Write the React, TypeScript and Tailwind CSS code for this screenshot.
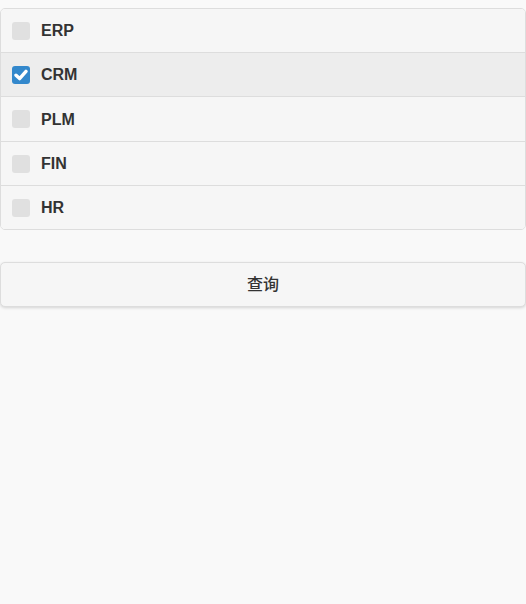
import React, { useState } from "react";

const items = ["ERP", "CRM", "PLM", "FIN", "HR"];

export default function App() {
  const [checked, setChecked] = useState<Record<string, boolean>>({ CRM: true });
  return (
    <div
      className="min-h-[604px] bg-[#f9f9f9] text-[#333]"
      style={{ fontFamily: '"Liberation Sans", Arial, "Noto Sans CJK SC", sans-serif' }}
    >
      <div className="pt-[8px]">
        <div className="rounded-[5px] border border-[#dddddd] overflow-hidden">
          {items.map((it, i) => {
            const on = !!checked[it];
            return (
              <label
                key={it}
                onClick={() => setChecked({ ...checked, [it]: !on })}
                className={`flex items-center cursor-pointer ${i > 0 ? "h-[44.2px] border-t border-[#dddddd]" : "h-[43.2px]"} ${on ? "bg-[#ededed]" : "bg-[#f6f6f6]"}`}
              >
                <span
                  className={`ml-[11px] mt-[1px] w-[18px] h-[18px] rounded-[3px] flex items-center justify-center ${on ? "bg-[#3388cc]" : "bg-[#e0e0e0]"}`}
                >
                  {on && (
                    <svg width="14" height="14" viewBox="0 0 14 14">
                      <path d="M2 7.2 L5.6 10.6 L12 3.4" fill="none" stroke="#fff" strokeWidth="3.4" strokeLinecap="round" strokeLinejoin="round" />
                    </svg>
                  )}
                </span>
                <span className="ml-[11px] pt-[2px] text-[16px] font-bold leading-[20.8px]">{it}</span>
              </label>
            );
          })}
        </div>
      </div>
      <div className="mt-[32px]">
        <button className="w-full h-[45px] pt-[1px] rounded-[5px] border border-[#dddddd] bg-[#f6f6f6] text-[16px] font-medium text-[#333] shadow-[0_1px_3px_rgba(0,0,0,0.15)]">
          查询
        </button>
      </div>
    </div>
  );
}
